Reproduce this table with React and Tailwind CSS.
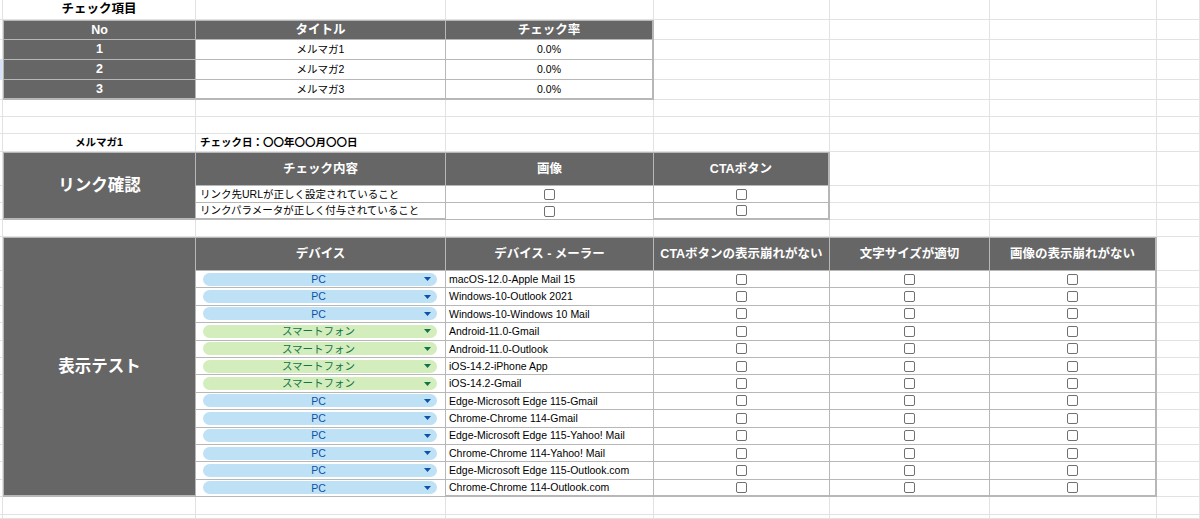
import React from "react";

const devices = [
  ["PC", "macOS-12.0-Apple Mail 15"],
  ["PC", "Windows-10-Outlook 2021"],
  ["PC", "Windows-10-Windows 10 Mail"],
  ["SP", "Android-11.0-Gmail"],
  ["SP", "Android-11.0-Outlook"],
  ["SP", "iOS-14.2-iPhone App"],
  ["SP", "iOS-14.2-Gmail"],
  ["PC", "Edge-Microsoft Edge 115-Gmail"],
  ["PC", "Chrome-Chrome 114-Gmail"],
  ["PC", "Edge-Microsoft Edge 115-Yahoo! Mail"],
  ["PC", "Chrome-Chrome 114-Yahoo! Mail"],
  ["PC", "Edge-Microsoft Edge 115-Outlook.com"],
  ["PC", "Chrome-Chrome 114-Outlook.com"],
];

// plain sheet cell with light grid lines
const Empty = ({ className = "" }) => (
  <div className={"border-r border-b border-[#e2e2e2] " + className} />
);

const Gutter = ({ active }) => (
  <div
    className={
      "border-r border-b border-[#e2e2e2] " + (active ? "bg-[#d3e3fd]" : "")
    }
  />
);

// table cell, darker border
const Cell = ({ children, className = "" }) => (
  <div
    className={
      "flex items-center overflow-hidden whitespace-nowrap border-r border-b border-[#b7b7b7] leading-none " +
      className
    }
  >
    {children}
  </div>
);

const Head = ({ children, className = "" }) => (
  <Cell
    className={
      "justify-center bg-[#666666] text-[12.5px] font-bold text-white " +
      className
    }
  >
    {children}
  </Cell>
);

const Check = () => (
  <Cell className="justify-center bg-white">
    <span className="block h-[11px] w-[11px] rounded-[2px] border-[1.5px] border-[#707070]" />
  </Cell>
);

const Chip = ({ kind }) => {
  const pc = kind === "PC";
  return (
    <Cell className="bg-white px-[7px] pr-[8px]">
      <div
        className={
          "flex h-[13px] w-full items-center rounded-full pr-[6px] pl-[10px] " +
          (pc ? "bg-[#bfe1f6] text-[#0a53a8]" : "bg-[#d4edbc] text-[#11734b]")
        }
      >
        <span className="flex-1 text-center text-[10.5px] leading-none">
          {pc ? "PC" : "スマートフォン"}
        </span>
        <svg width="7" height="4" viewBox="0 0 7 4">
          <path d="M0 0h7L3.5 4z" fill="currentColor" />
        </svg>
      </div>
    </Cell>
  );
};

const App = () => {
  return (
    <div className="grid h-[519px] w-[1200px] grid-cols-[3px_193px_250px_208px_176px_160px_167px_1fr] grid-rows-[20px_20px_20px_20px_20px_17px_17px_18px_34px_17px_17px_17px_34px_repeat(13,17.4px)_18px_1fr] overflow-hidden bg-white font-['Liberation_Sans','Noto_Sans_CJK_JP',sans-serif] text-[10.5px] text-black">
      {/* row 1 */}
      <Gutter />
      <div className="flex items-center justify-center border-r border-b border-[#e2e2e2] text-[12.5px] font-bold">
        チェック項目
      </div>
      {[0, 1, 2, 3, 4, 5].map((i) => (
        <Empty key={i} />
      ))}

      {/* top table */}
      <Gutter />
      <Head className="border-t border-l">No</Head>
      <Head className="border-t">タイトル</Head>
      <Head className="border-t border-r-2">チェック率</Head>
      {[0, 1, 2, 3].map((i) => (
        <Empty key={i} />
      ))}
      {[1, 2, 3].map((n) => (
        <React.Fragment key={n}>
          <Gutter active={n === 2} />
          <Head className={"border-l " + (n === 3 ? "border-b-2" : "")}>
            {n}
          </Head>
          <Cell className={"justify-center " + (n === 3 ? "border-b-2" : "")}>
            メルマガ{n}
          </Cell>
          <Cell
            className={
              "justify-center border-r-2 " + (n === 3 ? "border-b-2" : "")
            }
          >
            0.0%
          </Cell>
          {[0, 1, 2, 3].map((i) => (
            <Empty key={i} />
          ))}
        </React.Fragment>
      ))}

      {/* spacer rows */}
      {[0, 1].map((r) =>
        [0, 1, 2, 3, 4, 5, 6, 7].map((i) => <Empty key={r + "-" + i} />)
      )}

      {/* link check */}
      <Gutter />
      <div className="flex items-center justify-center border-r border-b border-[#e2e2e2] font-bold">
        メルマガ1
      </div>
      <div className="flex items-center border-r border-b border-[#e2e2e2] pl-[4px] font-bold">
        チェック日：〇〇年〇〇月〇〇日
      </div>
      {[0, 1, 2, 3, 4].map((i) => (
        <Empty key={i} />
      ))}

      <Gutter />
      <Head className="row-span-3 border-t border-l border-b-2 text-[16.5px]">
        リンク確認
      </Head>
      <Head className="border-t">チェック内容</Head>
      <Head className="border-t">画像</Head>
      <Head className="border-t border-r-2">CTAボタン</Head>
      {[0, 1, 2].map((i) => (
        <Empty key={i} />
      ))}
      {[
        "リンク先URLが正しく設定されていること",
        "リンクパラメータが正しく付与されていること",
      ].map((t, n) => (
        <React.Fragment key={t}>
          <Gutter />
          <Cell className={"pl-[4px] " + (n === 1 ? "border-b-2" : "")}>
            {t}
          </Cell>
          <Check />
          <Cell
            className={
              "justify-center border-r-2 " + (n === 1 ? "border-b-2" : "")
            }
          >
            <span className="block h-[11px] w-[11px] rounded-[2px] border-[1.5px] border-[#707070]" />
          </Cell>
          {[0, 1, 2].map((i) => (
            <Empty key={i} />
          ))}
        </React.Fragment>
      ))}

      {[0, 1, 2, 3, 4, 5, 6, 7].map((i) => (
        <Empty key={"s" + i} />
      ))}

      {/* display test */}
      <Gutter />
      <Head className="row-[span_14/span_14] border-t border-l border-b-2 text-[16.5px]">
        表示テスト
      </Head>
      <Head className="border-t">デバイス</Head>
      <Head className="border-t">デバイス - メーラー</Head>
      <Head className="border-t">CTAボタンの表示崩れがない</Head>
      <Head className="border-t">文字サイズが適切</Head>
      <Head className="border-t border-r-2">画像の表示崩れがない</Head>
      <Empty />
      {devices.map(([kind, name], n) => {
        const last = n === devices.length - 1 ? "border-b-2" : "";
        return (
          <React.Fragment key={name}>
            <Gutter />
            <Chip kind={kind} />
            <Cell className={"pl-[3px] " + last}>{name}</Cell>
            <Cell className={"justify-center " + last}>
              <span className="block h-[11px] w-[11px] rounded-[2px] border-[1.5px] border-[#707070]" />
            </Cell>
            <Cell className={"justify-center " + last}>
              <span className="block h-[11px] w-[11px] rounded-[2px] border-[1.5px] border-[#707070]" />
            </Cell>
            <Cell className={"justify-center border-r-2 " + last}>
              <span className="block h-[11px] w-[11px] rounded-[2px] border-[1.5px] border-[#707070]" />
            </Cell>
            <Empty />
          </React.Fragment>
        );
      })}

      {[0, 1].map((r) =>
        [0, 1, 2, 3, 4, 5, 6, 7].map((i) => <Empty key={"e" + r + i} />)
      )}
    </div>
  );
};

export default App;
